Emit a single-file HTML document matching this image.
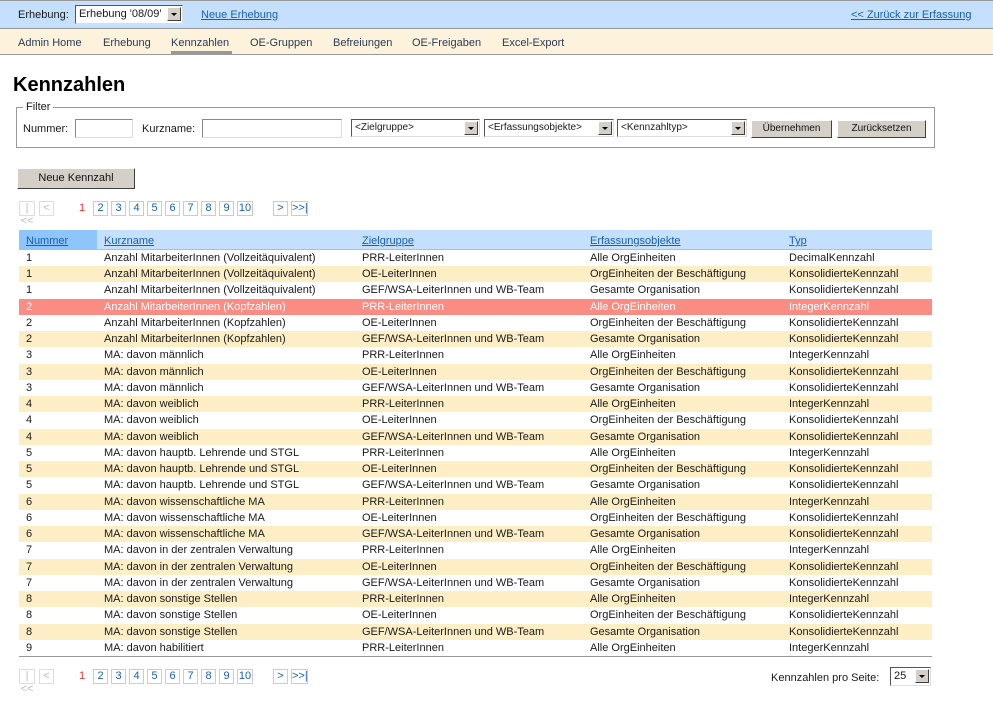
<!DOCTYPE html>
<html><head><meta charset="utf-8">
<style>
*{box-sizing:border-box;margin:0;padding:0}
body{width:993px;height:714px;background:#fff;font-family:"Liberation Sans",sans-serif;font-size:11px;color:#1a1a1a;position:relative;overflow:hidden}
.a{position:absolute;white-space:nowrap}
a{color:#1a5fb4;text-decoration:underline}
#top{position:absolute;left:0;top:0;width:993px;height:29px;background:#c4e0fc;border-top:1px solid #999;border-bottom:1px solid #999}
#nav{position:absolute;left:0;top:29px;width:993px;height:26px;background:#fdf3dc;border-bottom:1px solid #999;color:#2b3a55;font-size:11px}
.sel{position:absolute;height:18px;background:#fff;border:1px solid;border-color:#555 #ddd #ddd #555;font-size:10px;padding:2px 3px}
.sel .ar{position:absolute;right:1px;top:1px;width:14px;height:14px;background:#d4d0c8;border:1px solid;border-color:#fff #404040 #404040 #fff}
.sel .ar:after{content:"";position:absolute;left:3px;top:5px;border-left:3px solid transparent;border-right:3px solid transparent;border-top:3px solid #000}
.inp{position:absolute;height:19px;background:#fff;border:1px solid;border-color:#888 #ddd #ddd #888}
.btn{position:absolute;background:#d4d0c8;border:1px solid;border-color:#fff #404040 #404040 #fff;text-align:center;font-size:10px;color:#111}
.pg{position:absolute;height:15px;border:1px solid #ccc;color:#1a5fb4;text-align:center;font-size:11px;line-height:13px}
.row{position:absolute;left:19px;width:913px;height:16.24px;font-size:11px;line-height:16px}
.row span{position:absolute;top:0}
.c1{left:7px}.c2{left:85px}.c3{left:343px}.c4{left:571px}.c5{left:770px}
</style></head><body>
<div id="top">
<span class="a" style="left:18px;top:8px">Erhebung:</span>
<div class="sel" style="left:75px;top:4px;width:108px;height:19px;font-size:11px">Erhebung '08/09'<div class="ar"></div></div>
<a class="a" style="left:201px;top:8px">Neue Erhebung</a>
<a class="a" style="left:851px;top:8px">&lt;&lt; Zurück zur Erfassung</a>
</div>
<div id="nav">
<span class="a" style="left:18px;top:8px">Admin Home</span>
<span class="a" style="left:103px;top:8px">Erhebung</span>
<span class="a" style="left:171px;top:8px">Kennzahlen</span>
<div class="a" style="left:171px;top:22px;width:61px;height:3px;background:#999"></div>
<span class="a" style="left:250px;top:8px">OE-Gruppen</span>
<span class="a" style="left:333px;top:8px">Befreiungen</span>
<span class="a" style="left:412px;top:8px">OE-Freigaben</span>
<span class="a" style="left:502px;top:8px">Excel-Export</span>
</div>
<div class="a" style="left:13px;top:74px;font-size:20px;font-weight:bold;color:#000">Kennzahlen</div>
<div class="a" style="left:16px;top:107px;width:919px;height:41px;border:1px solid #999"></div>
<span class="a" style="left:23px;top:101px;background:#fff;padding:0 3px;font-size:11px">Filter</span>
<span class="a" style="left:23px;top:123px">Nummer:</span>
<div class="inp" style="left:75px;top:119px;width:58px"></div>
<span class="a" style="left:142px;top:123px">Kurzname:</span>
<div class="inp" style="left:202px;top:119px;width:140px"></div>
<div class="sel" style="left:351px;top:119px;width:129px">&lt;Zielgruppe&gt;<div class="ar"></div></div>
<div class="sel" style="left:484px;top:119px;width:130px">&lt;Erfassungsobjekte&gt;<div class="ar"></div></div>
<div class="sel" style="left:617px;top:119px;width:130px">&lt;Kennzahltyp&gt;<div class="ar"></div></div>
<div class="btn" style="left:751px;top:120px;width:81px;height:18px;line-height:15px">Übernehmen</div>
<div class="btn" style="left:837px;top:120px;width:89px;height:18px;line-height:15px">Zurücksetzen</div>
<div class="btn" style="left:17px;top:168px;width:118px;height:21px;line-height:19px;font-size:11px">Neue Kennzahl</div>

<div id="pager1"></div>
<div class="a" style="left:19px;top:230px;width:913px;height:20px;background:#c4e0fc;border-bottom:1px solid #bbb"></div>
<div class="a" style="left:19px;top:230px;width:78px;height:20px;background:#8ec5fa"></div>
<a class="a" style="left:26px;top:235px">Nummer</a>
<a class="a" style="left:104px;top:235px">Kurzname</a>
<a class="a" style="left:362px;top:235px">Zielgruppe</a>
<a class="a" style="left:590px;top:235px">Erfassungsobjekte</a>
<a class="a" style="left:789px;top:235px">Typ</a>
<div id="rows"></div>
<div class="a" style="left:19px;top:656px;width:913px;height:1px;background:#999"></div>
<span class="a" style="left:771px;top:672px">Kennzahlen pro Seite:</span>
<div class="sel" style="left:890px;top:667px;width:41px;height:19px;font-size:11px">25<div class="ar"></div></div>
<script>
function pager(y){var h='';
h+='<div class="pg" style="left:19px;top:'+y+'px;width:16px;color:#bbb;border-color:#ddd">|&lt;&lt;</div>';
h+='<div class="pg" style="left:39px;top:'+y+'px;width:15px;color:#bbb;border-color:#ddd">&lt;</div>';
h+='<span class="a" style="left:79px;top:'+(y+1)+'px;color:#e33">1</span>';
var xs=[93,111,129,147,165,183,201,219,237];
for(var i=0;i<9;i++)h+='<div class="pg" style="left:'+xs[i]+'px;top:'+y+'px;width:'+(i==8?16:15)+'px">'+(i+2)+'</div>';
h+='<div class="pg" style="left:273px;top:'+y+'px;width:15px">&gt;</div>';
h+='<div class="pg" style="left:291px;top:'+y+'px;width:17px">&gt;&gt;|</div>';
return h;}
document.getElementById('pager1').outerHTML=pager(201)+pager(669);
var names=['Anzahl MitarbeiterInnen (Vollzeitäquivalent)','Anzahl MitarbeiterInnen (Kopfzahlen)','MA: davon männlich','MA: davon weiblich','MA: davon hauptb. Lehrende und STGL','MA: davon wissenschaftliche MA','MA: davon in der zentralen Verwaltung','MA: davon sonstige Stellen','MA: davon habilitiert'];
var zg=['PRR-LeiterInnen','OE-LeiterInnen','GEF/WSA-LeiterInnen und WB-Team'];
var eo=['Alle OrgEinheiten','OrgEinheiten der Beschäftigung','Gesamte Organisation'];
var h='';
for(var i=0;i<25;i++){var n=Math.floor(i/3),k=i%3;
var typ=k==0?(n==0?'DecimalKennzahl':'IntegerKennzahl'):'KonsolidierteKennzahl';
var bg=i==3?'#fb8c84':(i%2?'#fdeec6':'#fff');var col=i==3?'#fff':'#1a1a1a';
h+='<div class="row" style="top:'+(250+i*16.24)+'px;background:'+bg+';color:'+col+'"><span class="c1">'+(n+1)+'</span><span class="c2">'+names[n]+'</span><span class="c3">'+zg[k]+'</span><span class="c4">'+eo[k]+'</span><span class="c5">'+typ+'</span></div>';}
document.getElementById('rows').outerHTML=h;
</script>
</body></html>
